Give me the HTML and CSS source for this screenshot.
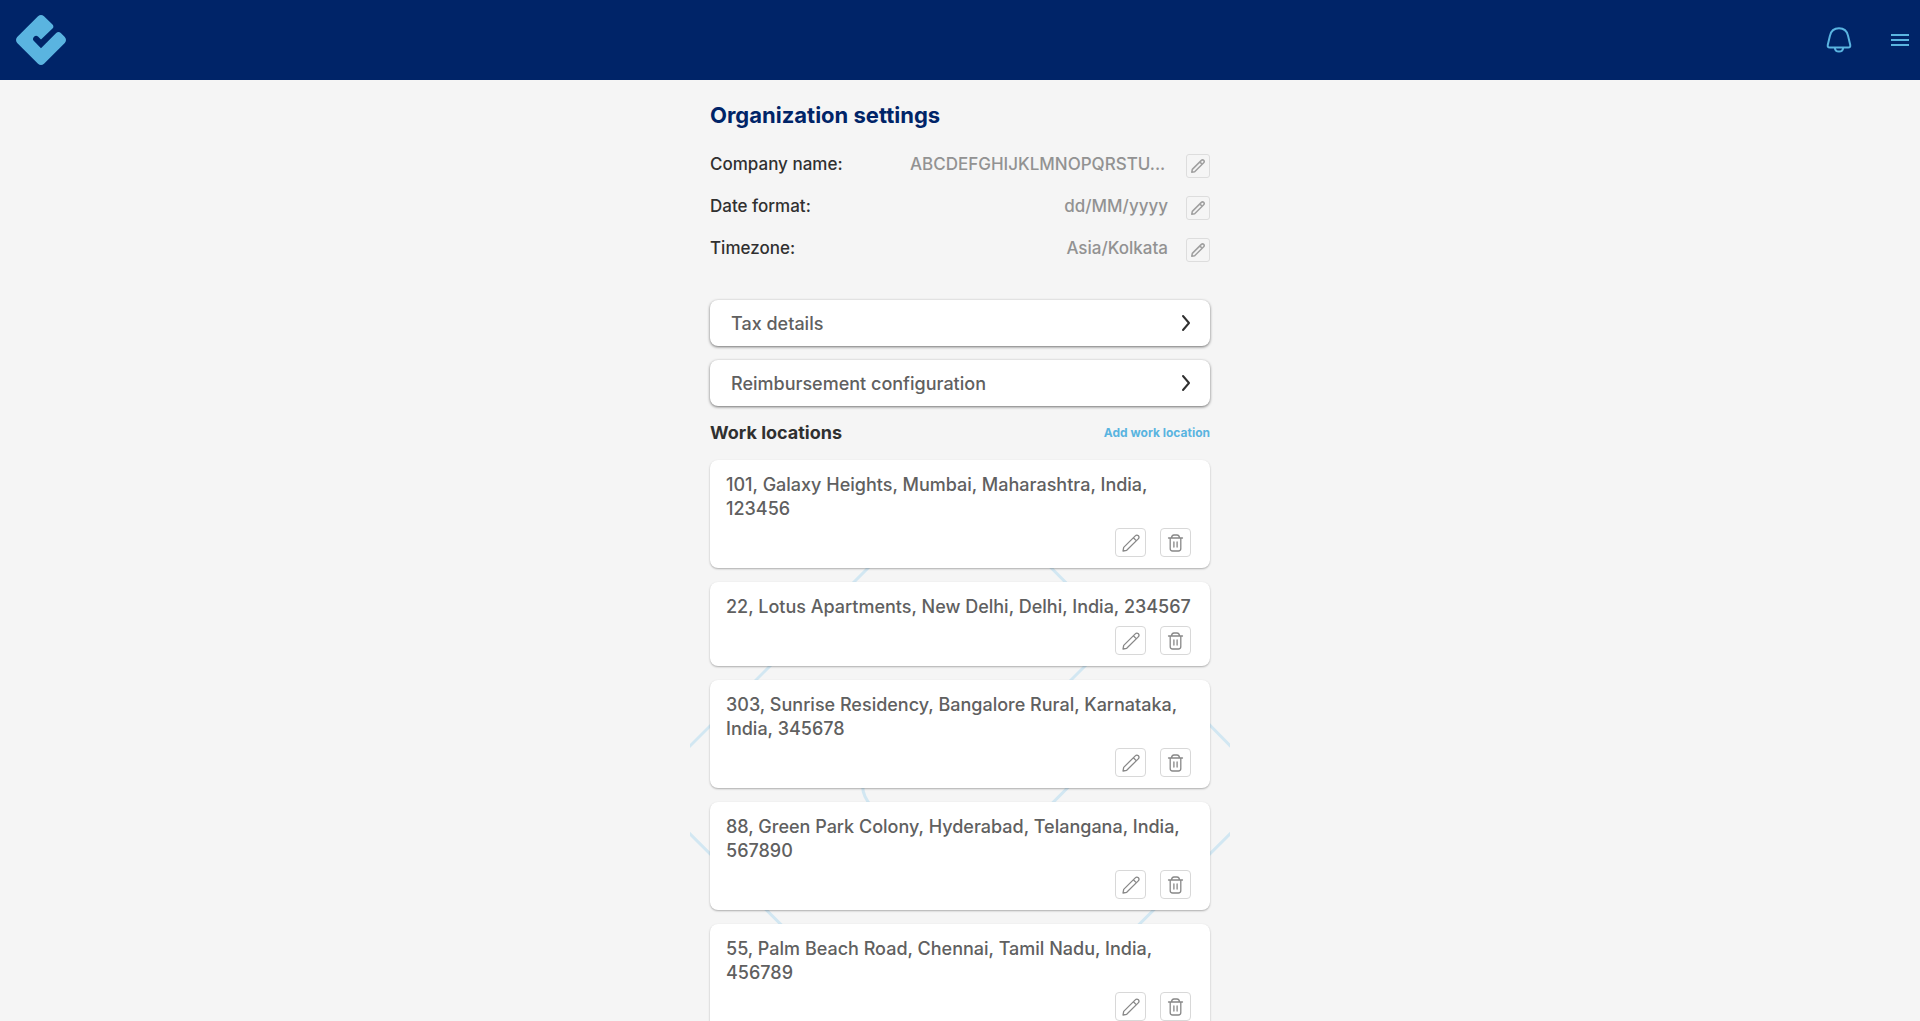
FILE: index.html
```html
<!DOCTYPE html>
<html lang="en">
<head>
<meta charset="utf-8">
<title>Organization settings</title>
<link rel="stylesheet" href="styles.css">
</head>
<body>
<svg class="sprite" aria-hidden="true">
  <symbol id="pencil" viewBox="0 0 18 18"><path d="M1 17 L1.7 13.4 L13 2.1 Q14.8 .3 16.4 1.8 Q17.8 3.4 16 5.1 L4.7 16.3 Z M11.4 3.8 L14.2 6.6" /></symbol>
  <symbol id="trash" viewBox="0 0 18 18"><path d="M1.5 4H15.5 M4.5 4V3.5Q5 1 7 1H10Q12 1 12.5 3.5V4 M3.2 4V14.5Q3.2 17 5.7 17H11.3Q13.8 17 13.8 14.5V4 M6.9 8V13 M10.1 8V13" /></symbol>
  <symbol id="chevron" viewBox="0 0 10 18"><path d="M2 2L8 9L2 16" /></symbol>
</svg>
<header class="topbar">
  <a class="brand" href="#" aria-label="Home">
    <svg viewBox="0 0 50 50" width="50" height="50"><path d="M22 1.2Q25 -1.2 28 1.2L36.5 9.6Q38.3 11.8 36.5 13.6L25 24.6L22 21.6Q20 20 18.3 21.6Q16 23.5 17.7 25.8L25 33.3L40.2 18Q42.5 16 44.8 18L48.8 22Q51.2 25 48.8 28L28 48.8Q25 51.2 22 48.8L1.2 28Q-1.2 25 1.2 22Z" fill="#5ab4e0"/></svg>
  </a>
  <div class="tools">
    <button class="tool" aria-label="Notifications"><svg width="26" height="26" viewBox="0 0 26 26"><path d="M4 8.6C5 4 8.6 1.2 13 1.2S21 4 22 8.6L24.2 17.8Q24.8 20.6 22.2 20.6H3.8Q1.2 20.6 1.8 17.8ZM8.8 20.8C9.4 25.8 16.6 25.8 17.2 20.8"/></svg></button>
    <button class="tool" aria-label="Menu"><svg width="20" height="14" viewBox="0 0 20 14"><path d="M1 2H19M1 7H19M1 12H19"/></svg></button>
  </div>
</header>
<main class="page">
  <svg class="watermark" width="540" height="640" viewBox="690 470 540 640" aria-hidden="true"><path d="M935 501Q960 478 985 501L1101 618Q1117 634 1101 650L972 779Q961 785 950 779L925 754Q905 738 885 754L875 764Q852 784 872 807L961 895L1144 711Q1170 690 1196 711L1253 769Q1274 790 1253 811L985 1078Q960 1102 935 1078L667 811Q646 790 667 769Z"/></svg>
  <h1 class="title">Organization settings</h1>
  <dl class="settings">
    <div class="setting"><dt>Company name:</dt><dd class="name">ABCDEFGHIJKLMNOPQRSTU...</dd><dd><button class="mini" aria-label="Edit company name"><svg width="14" height="14"><use href="#pencil"/></svg></button></dd></div>
    <div class="setting"><dt>Date format:</dt><dd>dd/MM/yyyy</dd><dd><button class="mini" aria-label="Edit date format"><svg width="14" height="14"><use href="#pencil"/></svg></button></dd></div>
    <div class="setting"><dt>Timezone:</dt><dd>Asia/Kolkata</dd><dd><button class="mini" aria-label="Edit timezone"><svg width="14" height="14"><use href="#pencil"/></svg></button></dd></div>
  </dl>
  <nav class="links">
    <a class="link" href="#">Tax details<svg width="10" height="18"><use href="#chevron"/></svg></a>
    <a class="link" href="#">Reimbursement configuration<svg width="10" height="18"><use href="#chevron"/></svg></a>
  </nav>
  <div class="section"><h2>Work locations</h2><a href="#">Add work location</a></div>
  <ul class="places">
    <li class="place"><p>101, Galaxy Heights, Mumbai, Maharashtra, India, 123456</p><div class="actions"><button aria-label="Edit"><svg width="18" height="18"><use href="#pencil"/></svg></button><button aria-label="Delete"><svg width="18" height="18"><use href="#trash"/></svg></button></div></li>
    <li class="place"><p>22, Lotus Apartments, New Delhi, Delhi, India, 234567</p><div class="actions"><button aria-label="Edit"><svg width="18" height="18"><use href="#pencil"/></svg></button><button aria-label="Delete"><svg width="18" height="18"><use href="#trash"/></svg></button></div></li>
    <li class="place"><p>303, Sunrise Residency, Bangalore Rural, Karnataka, India, 345678</p><div class="actions"><button aria-label="Edit"><svg width="18" height="18"><use href="#pencil"/></svg></button><button aria-label="Delete"><svg width="18" height="18"><use href="#trash"/></svg></button></div></li>
    <li class="place"><p>88, Green Park Colony, Hyderabad, Telangana, India, 567890</p><div class="actions"><button aria-label="Edit"><svg width="18" height="18"><use href="#pencil"/></svg></button><button aria-label="Delete"><svg width="18" height="18"><use href="#trash"/></svg></button></div></li>
    <li class="place"><p>55, Palm Beach Road, Chennai, Tamil Nadu, India, 456789</p><div class="actions"><button aria-label="Edit"><svg width="18" height="18"><use href="#pencil"/></svg></button><button aria-label="Delete"><svg width="18" height="18"><use href="#trash"/></svg></button></div></li>
  </ul>
</main>
</body>
</html>
```
FILE: styles.css
```css
* { box-sizing: border-box; }
html { scrollbar-width: none; background: #f5f5f5; }
body { margin: 0; font-family: Inter, "Liberation Sans", sans-serif; font-weight: 500; color: #303030; }
h1, h2, p, dl, dd, ul { margin: 0; padding: 0; }
button { padding: 0; background: none; cursor: pointer; }
a { text-decoration: none; }
svg { display: block; fill: none; stroke: currentColor; stroke-linecap: round; stroke-linejoin: round; }
.sprite { display: none; }

.topbar { display: flex; align-items: center; justify-content: space-between; height: 80px; padding: 0 10px 0 16px; background: #002468; }
.brand svg { stroke: none; }
.tools { display: flex; align-items: center; gap: 38px; color: #5ab4e0; }
.tool { border: 0; color: inherit; }
.tool svg { stroke-width: 2; stroke-linecap: butt; }

.page { position: relative; z-index: 0; max-width: 540px; margin: 0 auto; padding: 20px 20px 40px; }
.watermark { position: absolute; z-index: -1; top: 390px; left: 0; color: #d2e7f2; stroke-width: 3; }
.title { font-size: 22px; line-height: 30px; font-weight: 700; color: #002468; }

.settings { padding-top: 13px; font-size: 17px; line-height: 42px; }
.setting { display: flex; align-items: center; height: 42px; }
.setting dt { flex: 1; }
.setting dd { color: #929292; }
.setting .name { width: 258px; white-space: nowrap; }
.mini { display: grid; place-items: center; width: 24px; height: 24px; margin: 4px 0 0 18px; border: 1px solid #ddd; border-radius: 3px; color: #a0a0a0; }
.mini svg { stroke-width: 2; }

.links { display: grid; gap: 14px; padding-top: 31px; }
.link { display: flex; align-items: center; justify-content: space-between; height: 46px; padding: 0 19px 0 21px; border-radius: 8px; background: #fff; box-shadow: 0 1px 3px #0000008c; font-size: 18px; color: #606060; }
.link svg { color: #303030; stroke-width: 2; }

.section { display: flex; align-items: center; justify-content: space-between; height: 54px; }
.section h2 { font-size: 18px; font-weight: 700; line-height: 24px; }
.section a { font-size: 12px; font-weight: 700; line-height: 24px; color: #5ab4e0; }

.places { display: grid; gap: 14px; list-style: none; }
.place { padding: 13px 14px 11px 16px; border-radius: 8px; background: #fff; box-shadow: 0 1px 2px #0000004d; font-size: 18px; line-height: 24px; color: #606060; }
.actions { display: flex; justify-content: flex-end; gap: 14px; padding: 7px 5px 0; }
.actions button { display: grid; place-items: center; width: 31px; height: 29px; border: 1px solid #d8d8d8; border-radius: 4px; color: #888; }
.actions svg { stroke-width: 1.3; }
```
